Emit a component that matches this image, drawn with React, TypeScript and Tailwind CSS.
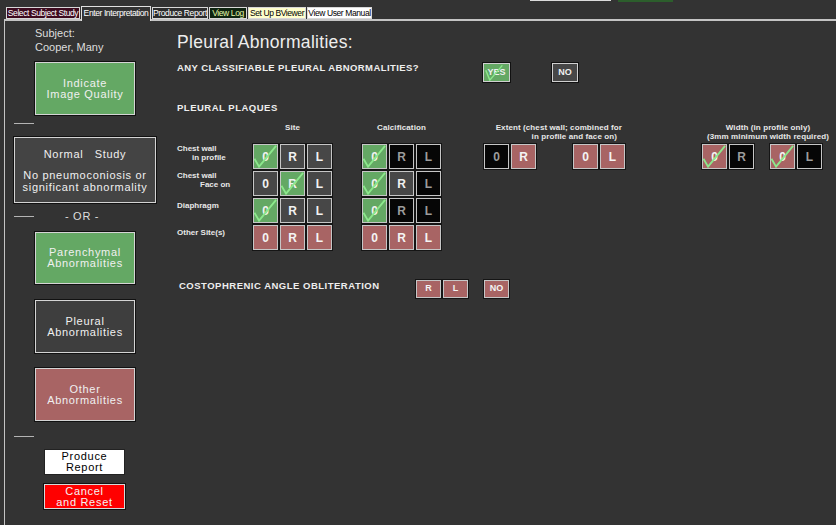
import React from 'react'
import clsx from 'clsx'

type Tone = 'green' | 'gray' | 'black' | 'rose'

const toneClass: Record<Tone, string> = {
  green: 'bg-[#64a864] text-[#f2f2f2]',
  gray: 'bg-[#474747] text-[#f2f2f2]',
  black: 'bg-[#060606] text-[#9c9c9c]',
  rose: 'bg-[#a86464] text-[#f4f4f4]',
}

type CellSpec = [string, Tone, boolean?]

function Check() {
  return (
    <svg viewBox="0 0 25 25" className="pointer-events-none absolute inset-0 h-full w-full overflow-visible">
      <polyline points="0.5,15 5.5,23.5 24,1" fill="none" stroke="#8ce88c" strokeWidth="2" />
    </svg>
  )
}

function Cell({ spec, small }: { spec: CellSpec; small?: boolean }) {
  const [label, tone, checked] = spec
  return (
    <div
      className={clsx(
        'relative flex items-center justify-center border border-[#c6c6c6] font-bold shadow-[0_0_0_1px_#151515]',
        small ? 'h-[18px] w-[25px] text-[9px]' : 'h-[25px] w-[25px] text-[12px]',
        toneClass[tone]
      )}
    >
      {label}
      {checked && <Check />}
    </div>
  )
}

function Group({ cells }: { cells: CellSpec[] }) {
  return (
    <div className="flex gap-[2px]">
      {cells.map((c, i) => (
        <Cell key={i} spec={c} />
      ))}
    </div>
  )
}

const rose3: CellSpec[] = [['0', 'rose'], ['R', 'rose'], ['L', 'rose']]

const rows: { labels: React.ReactNode; site: CellSpec[]; calc: CellSpec[] }[] = [
  {
    labels: (
      <>
        <div>Chest wall</div>
        <div className="pl-[15px]">in profile</div>
      </>
    ),
    site: [['0', 'green', true], ['R', 'gray'], ['L', 'gray']],
    calc: [['0', 'green', true], ['R', 'black'], ['L', 'black']],
  },
  {
    labels: (
      <>
        <div>Chest wall</div>
        <div className="pl-[23px]">Face on</div>
      </>
    ),
    site: [['0', 'gray'], ['R', 'green', true], ['L', 'gray']],
    calc: [['0', 'green', true], ['R', 'gray'], ['L', 'black']],
  },
  {
    labels: <div className="pt-[3px]">Diaphragm</div>,
    site: [['0', 'green', true], ['R', 'gray'], ['L', 'gray']],
    calc: [['0', 'green', true], ['R', 'black'], ['L', 'black']],
  },
  {
    labels: <div className="pt-[3px]">Other Site(s)</div>,
    site: rose3,
    calc: rose3,
  },
]

function SideButton({
  tone,
  children,
  className,
}: {
  tone: string
  children: React.ReactNode
  className?: string
}) {
  return (
    <div
      className={clsx(
        'ml-[30px] flex w-[100px] flex-col items-center justify-center border border-[#d4d4d4] text-[11px] leading-[11px] tracking-[0.7px] text-[#f0f0f0] shadow-[0_0_0_1px_#111]',
        tone,
        className
      )}
    >
      {children}
    </div>
  )
}

function Dash() {
  return <div className="ml-[9px] h-px w-[20px] bg-[#b4b4b4]" />
}

const tabs = [
  { label: 'Select Subject Study', w: 'w-[74px]', cls: 'bg-[#3d0b1f] text-white border-[#d8d8d8]' },
  { label: 'Enter Interpretation', w: 'w-[70px]', cls: 'bg-[#333333] text-white border-[#e0e0e0]', active: true },
  { label: 'Produce Report', w: 'w-[56px]', cls: 'bg-[#2c2c2c] text-white border-[#d8d8d8]' },
  { label: 'View Log', w: 'w-[38px]', cls: 'bg-[#0e2410] text-[#e4f7a8] border-[#d8d8d8]' },
  { label: 'Set Up BViewer', w: 'w-[58px]', cls: 'bg-[#ffffcc] text-black border-[#d8d8d8]' },
  { label: 'View User Manual', w: 'w-[65px]', cls: 'bg-white text-black border-[#d8d8d8]' },
]

export default function App() {
  return (
    <div className="relative h-[525px] w-[836px] overflow-hidden bg-[#333333] font-['Liberation_Sans',Arial,sans-serif]">
      <div className="absolute left-[530px] top-0 h-px w-[81px] bg-[#dcdcdc]" />
      <div className="absolute left-[618px] top-0 h-[2px] w-[55px] bg-[#2c5e2c]" />

      {/* tab strip */}
      <div className="relative z-10 flex h-[19px] items-end gap-px pl-[6px]">
        {tabs.map((t) => (
          <div
            key={t.label}
            className={clsx(
              'flex items-center justify-center overflow-hidden whitespace-nowrap border text-[8.5px] tracking-[-0.4px]',
              t.w,
              t.cls,
              t.active ? '-mb-[2px] h-[15px] border-b-0 pb-[2px]' : 'h-[12px]'
            )}
          >
            {t.label}
          </div>
        ))}
      </div>

      <div className="ml-[4px] flex h-[506px] border-l border-t-2 border-[#c4c4c4]">
        {/* left column */}
        <div className="flex w-[172px] flex-col pt-[5px] text-[#dedede]">
          <div className="ml-[30px] text-[11px] leading-[14px]">
            <div>Subject:</div>
            <div>Cooper, Many</div>
          </div>

          <SideButton tone="bg-[#64a864]" className="mt-[8px] h-[53px]">
            <div>Indicate</div>
            <div>Image Quality</div>
          </SideButton>

          <div className="mt-[8px]">
            <Dash />
          </div>

          <div className="ml-[9px] mt-[13px] flex h-[66px] w-[142px] flex-col items-center border border-[#d4d4d4] bg-[#444444] pt-[9px] text-[11px] tracking-[0.7px] text-[#f0f0f0] shadow-[0_0_0_1px_#111]">
            <div className="whitespace-pre leading-[14px]">Normal   Study</div>
            <div className="mt-[8px] text-center leading-[12px]">
              <div>No pneumoconiosis or</div>
              <div>significant abnormality</div>
            </div>
          </div>

          <div className="mt-[7px] flex h-[12px] items-center">
            <Dash />
            <div className="ml-[31px] text-[11px] leading-[12px] tracking-[0.7px]">- OR -</div>
          </div>

          <SideButton tone="bg-[#64a864]" className="mt-[10px] h-[52px]">
            <div>Parenchymal</div>
            <div>Abnormalities</div>
          </SideButton>

          <SideButton tone="bg-[#3e3e3e]" className="mt-[16px] h-[53px]">
            <div>Pleural</div>
            <div>Abnormalities</div>
          </SideButton>

          <SideButton tone="bg-[#a86464]" className="mt-[15px] h-[53px]">
            <div>Other</div>
            <div>Abnormalities</div>
          </SideButton>

          <div className="mt-[15px]">
            <Dash />
          </div>

          <div className="ml-[39px] mt-[12px] flex h-[26px] w-[81px] flex-col items-center justify-center border border-[#222] bg-white text-[11px] leading-[11px] tracking-[0.7px] text-black">
            <div>Produce</div>
            <div>Report</div>
          </div>
          <div className="ml-[39px] mt-[9px] flex h-[25px] w-[81px] flex-col items-center justify-center border border-[#d8d8d8] bg-[#ff0000] text-[11px] leading-[11px] tracking-[0.7px] text-[#f4f4f4] shadow-[0_0_0_1px_#111]">
            <div>Cancel</div>
            <div>and Reset</div>
          </div>
        </div>

        {/* main */}
        <div className="flex flex-1 flex-col pt-[12px] text-[#eeeeee]">
          <div className="text-[17.5px] leading-[18px] tracking-[0.3px]">Pleural Abnormalities:</div>

          <div className="mt-[12px] flex h-[19px] items-start">
            <div className="w-[306px] text-[9.5px] font-bold leading-[10px] tracking-[0.4px]">
              ANY CLASSIFIABLE PLEURAL ABNORMALITIES?
            </div>
            <div className="relative flex h-[19px] w-[27px] items-center justify-center border border-[#d0d0d0] bg-[#64a864] text-[9px] font-bold text-[#f0f0f0] shadow-[0_0_0_1px_#111]">
              YES
              <svg viewBox="0 0 27 19" className="pointer-events-none absolute inset-0 h-full w-full">
                <polyline points="1.5,7 6,18 20,1.5" fill="none" stroke="#8ce88c" strokeWidth="1.6" />
              </svg>
            </div>
            <div className="ml-[42px] flex h-[19px] w-[26px] items-center justify-center border border-[#d0d0d0] bg-[#474747] text-[9px] font-bold text-[#f0f0f0] shadow-[0_0_0_1px_#111]">
              NO
            </div>
          </div>

          <div className="mt-[21px] text-[9.5px] font-bold leading-[10px] tracking-[0.5px]">PLEURAL PLAQUES</div>

          {/* column headers */}
          <div className="mt-[11px] flex h-[18px] text-[8px] font-bold leading-[8.5px] tracking-[0.1px] text-[#e8e8e8]">
            <div className="w-[76px]" />
            <div className="w-[79px] text-center">Site</div>
            <div className="ml-[30px] w-[79px] text-center">Calcification</div>
            <div className="ml-[43px] w-[141px] whitespace-nowrap text-right">
              <div className="pr-[3px]">Extent (chest wall; combined for</div>
              <div className="pr-[8px]">in profile and face on)</div>
            </div>
            <div className="ml-[77px] w-[132px] whitespace-nowrap text-center">
              <div>Width (in profile only)</div>
              <div>(3mm minimum width required)</div>
            </div>
          </div>

          {/* plaque rows */}
          <div className="mt-[2px] flex flex-col gap-[2px]">
            {rows.map((r, i) => (
              <div key={i} className="flex h-[25px] items-start">
                <div className="w-[76px] whitespace-nowrap text-[8px] font-bold leading-[9px] text-[#e8e8e8]">{r.labels}</div>
                <Group cells={r.site} />
                <div className="ml-[30px]">
                  <Group cells={r.calc} />
                </div>
                {i === 0 && (
                  <>
                    <div className="ml-[43px]">
                      <Group cells={[['0', 'black'], ['R', 'rose']]} />
                    </div>
                    <div className="ml-[37px]">
                      <Group cells={[['0', 'rose'], ['L', 'rose']]} />
                    </div>
                    <div className="ml-[77px]">
                      <Group cells={[['0', 'rose', true], ['R', 'black']]} />
                    </div>
                    <div className="ml-[16px]">
                      <Group cells={[['0', 'rose', true], ['L', 'black']]} />
                    </div>
                  </>
                )}
              </div>
            ))}
          </div>

          {/* costophrenic */}
          <div className="mt-[30px] flex h-[18px] items-start">
            <div className="w-[239px] pl-[2px] pt-[1px] text-[9.5px] font-bold leading-[10px] tracking-[0.5px]">
              COSTOPHRENIC ANGLE OBLITERATION
            </div>
            <div className="flex gap-[2px]">
              <Cell spec={['R', 'rose']} small />
              <Cell spec={['L', 'rose']} small />
            </div>
            <div className="ml-[16px]">
              <Cell spec={['NO', 'rose']} small />
            </div>
          </div>
        </div>
      </div>
    </div>
  )
}
